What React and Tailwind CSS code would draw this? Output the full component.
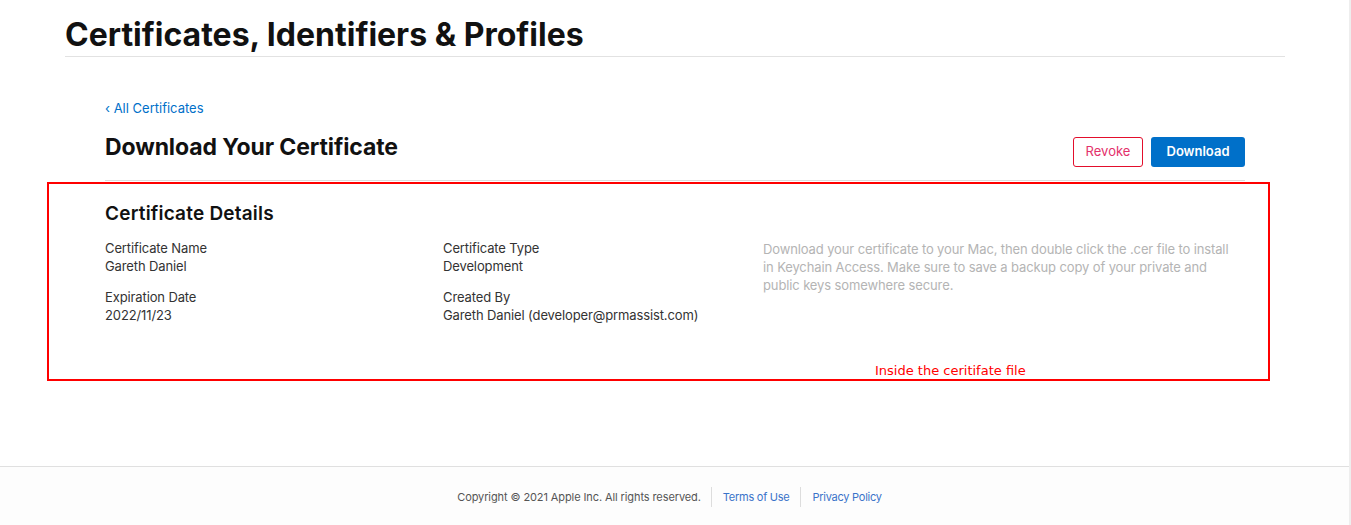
import React from 'react';

const font = { fontFamily: 'Inter, "Liberation Sans", sans-serif' };

function Field({ label, value }) {
  return (
    <div className="mb-[13px]">
      <div className="text-[13px] leading-[18px] text-[#333] tracking-[-0.12px]">{label}</div>
      <div className="text-[13px] leading-[18px] text-[#333] tracking-[-0.12px]">{value}</div>
    </div>
  );
}

export default function App() {
  return (
    <div className="relative w-[1351px] h-[525px] bg-white overflow-hidden flex" style={font}>
      <div className="flex-1 flex flex-col">
        <header className="pl-[65px] pr-[64px] pt-[15px]">
          <h1 className="text-[32px] leading-[40px] font-bold text-[#111]">
            Certificates, Identifiers &amp; Profiles
          </h1>
          <div className="mt-[1px] h-px bg-[#e2e2e2]" />
        </header>

        <main className="relative pl-[105px] pt-[38px] pr-[104px] h-[409px]">
          <a className="text-[13px] leading-[18px] text-[#0070c9]">‹ All Certificates</a>
          <div className="mt-[12px] flex items-start justify-between">
            <h2 className="text-[23px] leading-[32px] font-bold text-[#111] tracking-[-0.1px]">
              Download Your Certificate
            </h2>
            <div className="flex gap-2 mt-[6px]">
              <button className="w-[70px] h-[30px] rounded-[3px] border border-[#e30e2c] text-[13px] text-[#e3306b]">
                Revoke
              </button>
              <button className="w-[94px] h-[30px] rounded-[3px] bg-[#0070c9] text-[13px] font-semibold text-white">
                Download
              </button>
            </div>
          </div>
          <div className="mt-[13px] h-px bg-[#dcdcdc]" />

          <h3 className="mt-[20px] text-[19px] leading-[26px] font-semibold text-[#111] tracking-[0.2px]">
            Certificate Details
          </h3>
          <div className="mt-[12px] grid grid-cols-[338px_320px_1fr]">
            <div>
              <Field label="Certificate Name" value="Gareth Daniel" />
              <Field label="Expiration Date" value="2022/11/23" />
            </div>
            <div>
              <Field label="Certificate Type" value="Development" />
              <Field label="Created By" value="Gareth Daniel (developer@prmassist.com)" />
            </div>
            <p className="text-[13px] leading-[18px] text-[#b4b4b4] tracking-[-0.12px] pt-[1px] pr-[12px]">
              Download your certificate to your Mac, then double click the .cer file to install
              in Keychain Access. Make sure to save a backup copy of your private and public keys
              somewhere secure.
            </p>
          </div>

          <div className="absolute left-[47px] top-[125px] w-[1223px] h-[199px] border-2 border-[#ff0000] pointer-events-none">
            <span
              className="absolute left-[826px] top-[180px] text-[13px] leading-[14px] text-[#ff0000]"
              style={{ fontFamily: '"DejaVu Sans", sans-serif' }}
            >
              Inside the ceritifate file
            </span>
          </div>
        </main>

        <footer className="flex-1 border-t border-[#e0e0e0] bg-[#fdfdfd] flex items-center justify-center pt-[2px] pr-[10px]">
          <div className="flex items-center text-[11px] leading-[16px] tracking-[-0.1px]">
            <span className="text-[#555] pr-[10px]">Copyright © 2021 Apple Inc. All rights reserved.</span>
            <span className="w-px h-[20px] bg-[#ddd]" />
            <a className="text-[#3a73c9] px-[11px] tracking-[-0.25px]">Terms of Use</a>
            <span className="w-px h-[20px] bg-[#ddd]" />
            <a className="text-[#3a73c9] pl-[11px] tracking-[-0.25px]">Privacy Policy</a>
          </div>
        </footer>
      </div>
      <div className="w-[2px] bg-[#eeeeee]" />
    </div>
  );
}
